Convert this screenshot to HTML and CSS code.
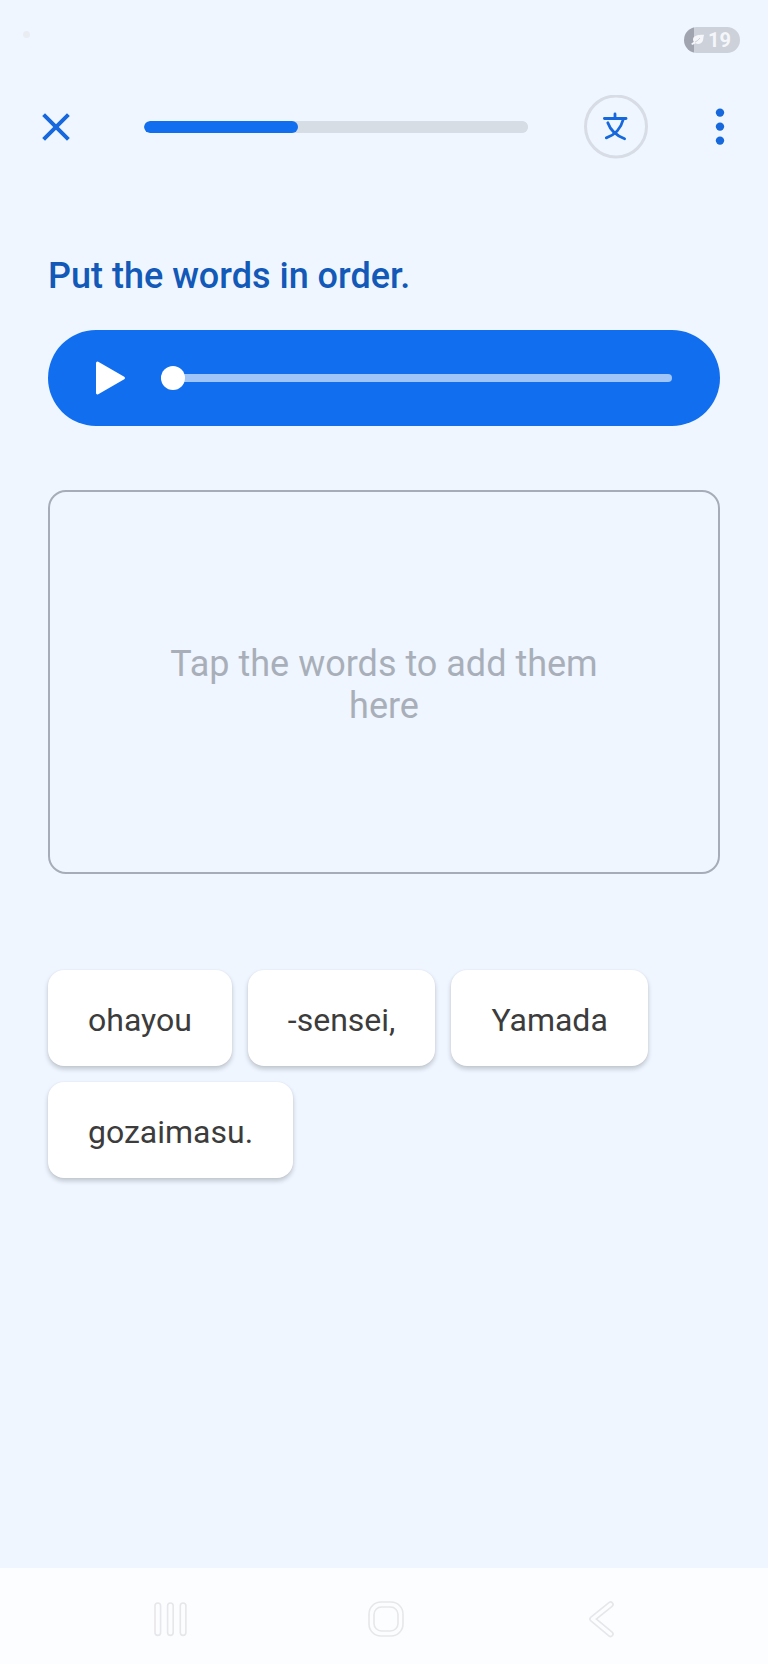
FILE: index.html
```
<!DOCTYPE html>
<html lang="en">

<head>
    <meta charset="utf-8">
    <meta name="viewport" content="width=device-width, initial-scale=1">
    <title>Put the words in order</title>
    <link rel="stylesheet" href="styles.css">
</head>

<body>
    <div class="status-bar">
        <span class="status-dot"></span>
        <div class="battery">
            <svg class="leaf" width="14" height="12" viewBox="0 0 14 12">
                <path d="M13.2 0.8C9 0.6 3.4 1 2.2 4.2C1.8 5.6 2.1 6.8 2.8 7.8C2 8.6 1 9.2 0.3 9.6L1 11C2.2 10.6 3.4 10 4.4 9.2C7 10.6 10.4 10 11.8 7C12.6 5.2 12.2 2.6 13.2 0.8Z" fill="#f4f6fa" />
                <path d="M4 8.2C6 7.2 7.8 5.6 9 4" fill="none" stroke="#cdd1d9" stroke-width="1" />
            </svg>
            <span>19</span>
        </div>
    </div>

    <header class="header">
        <button type="button" class="icon-btn" aria-label="Close">
            <svg width="32" height="32" viewBox="0 0 32 32">
                <path d="M3.6 3.6L28.4 28.4M28.4 3.6L3.6 28.4" stroke="#1668dc" stroke-width="4" />
            </svg>
        </button>
        <progress class="progress" value="40" max="100" aria-label="Lesson progress"></progress>
        <button type="button" class="translate-btn" aria-label="Translate">
            <svg width="64" height="64" viewBox="0 0 64 64">
                <circle cx="32" cy="31.5" r="30.5" fill="none" stroke="#d7dce5" stroke-width="3" />
                <g fill="none" stroke="#1668dc" stroke-width="2.8" stroke-linecap="round">
                    <path d="M20.4 23.5H42" />
                    <path d="M31 19V23.5" />
                    <path d="M23.8 27.7C26 34 31 40 40.6 43.7" />
                    <path d="M39.2 24.5C37 33 32 39.5 22.3 42.9" />
                </g>
            </svg>
        </button>
        <button type="button" class="icon-btn" aria-label="More options">
            <svg width="32" height="40" viewBox="0 0 32 40">
                <g fill="#1668dc">
                    <circle cx="16" cy="5.6" r="4.2" />
                    <circle cx="16" cy="19.6" r="4.2" />
                    <circle cx="16" cy="33.6" r="4.2" />
                </g>
            </svg>
        </button>
    </header>

    <main class="content">
        <h1>Put the words in order.</h1>

        <div class="player">
            <button type="button" class="play-btn" aria-label="Play">
                <svg width="32" height="36" viewBox="0 0 32 36">
                    <path d="M2.5 3L28.5 18L2.5 33Z" fill="#fff" stroke="#fff" stroke-width="3" stroke-linejoin="round" />
                </svg>
            </button>
            <input type="range" class="seek" min="0" max="100" value="0" aria-label="Audio position">
        </div>

        <div class="answer">
            <p>Tap the words to add them here</p>
        </div>

        <div class="words">
            <button type="button" class="word">ohayou</button>
            <button type="button" class="word">-sensei,</button>
            <button type="button" class="word">Yamada</button>
            <button type="button" class="word">gozaimasu.</button>
        </div>
    </main>

    <nav class="nav-bar">
        <button type="button" class="nav-btn" aria-label="Recent apps">
            <svg width="36" height="38" viewBox="0 0 36 38">
                <g fill="none" stroke="#e6e7ea" stroke-width="1.6">
                    <rect x="3" y="3" width="5.6" height="32.4" rx="2.8" />
                    <rect x="15.6" y="3" width="5.6" height="32.4" rx="2.8" />
                    <rect x="28.3" y="3" width="5.6" height="32.4" rx="2.8" />
                </g>
            </svg>
        </button>
        <button type="button" class="nav-btn" aria-label="Home">
            <svg width="36" height="38" viewBox="0 0 36 38">
                <g fill="none" stroke="#e6e7ea" stroke-width="1.6">
                    <rect x="1" y="2" width="34" height="34" rx="12" />
                    <rect x="6" y="7" width="24" height="24" rx="7.5" />
                </g>
            </svg>
        </button>
        <button type="button" class="nav-btn" aria-label="Back">
            <svg width="36" height="38" viewBox="0 0 36 38">
                <g fill="none" stroke-linecap="round" stroke-linejoin="round">
                    <path d="M26.5 4.5L8.5 19L26.5 34" stroke="#e6e7ea" stroke-width="6.6" />
                    <path d="M26.5 4.5L8.5 19L26.5 34" stroke="#fcfdff" stroke-width="3.4" />
                </g>
            </svg>
        </button>
    </nav>
</body>

</html>
```
FILE: styles.css
```
* {
    box-sizing: border-box;
}

body {
    margin: 0;
    min-height: 100vh;
    display: flex;
    flex-direction: column;
    font-family: Roboto, "Liberation Sans", sans-serif;
    background-color: #eff6ff;
}

button {
    padding: 0;
    border: none;
    background: none;
    font-family: inherit;
    cursor: pointer;
}

svg {
    display: block;
}

/* status bar */
.status-bar {
    display: flex;
    align-items: center;
    justify-content: space-between;
    height: 80px;
    padding: 0 28px 0 23px;
}

.status-dot {
    width: 7px;
    height: 7px;
    margin-bottom: 12px;
    border-radius: 50%;
    background-color: #e9edf2;
}

.battery {
    display: flex;
    align-items: center;
    gap: 3px;
    height: 26px;
    padding: 0 9px 0 7px;
    border-radius: 13px;
    background: linear-gradient(to right, #a0a4ae 10px, #cdd1d9 10px);
    font-size: 20px;
    font-weight: 700;
    line-height: 26px;
    color: #f4f6fa;
}

/* header */
.header {
    display: flex;
    align-items: center;
    height: 94px;
    padding: 0 32px 0 40px;
}

.progress {
    flex: 1;
    min-width: 0;
    height: 12px;
    margin: 0 56px 0 72px;
    border: none;
    border-radius: 6px;
    background-color: #d6dde4;
    overflow: hidden;
    appearance: none;
}

.progress::-webkit-progress-bar {
    background-color: #d6dde4;
    border-radius: 6px;
}

.progress::-webkit-progress-value {
    background-color: #116eee;
    border-radius: 6px;
}

.translate-btn {
    margin-right: 56px;
}

/* exercise */
.content {
    flex: 1;
    padding: 81px 48px 0;
}

h1 {
    margin: 0 0 33px;
    font-size: 36px;
    font-weight: 500;
    line-height: 42px;
    color: #1259b8;
}

.player {
    display: flex;
    align-items: center;
    gap: 34px;
    height: 96px;
    padding: 0 48px 0 47px;
    border-radius: 48px;
    background-color: #116eee;
}

.seek {
    flex: 1;
    min-width: 0;
    height: 24px;
    margin: 0;
    background: none;
    appearance: none;
}

.seek::-webkit-slider-runnable-track {
    height: 8px;
    border-radius: 4px;
    background-color: #a0c5f8;
}

.seek::-webkit-slider-thumb {
    width: 24px;
    height: 24px;
    margin-top: -8px;
    border-radius: 50%;
    background-color: #fff;
    appearance: none;
}

.answer {
    display: flex;
    align-items: center;
    justify-content: center;
    min-height: 384px;
    margin-top: 64px;
    padding: 6px 96px 0;
    border: 2px solid #a7adb8;
    border-radius: 18px;
}

.answer p {
    margin: 0;
    font-size: 36px;
    line-height: 42px;
    text-align: center;
    color: #a9afb9;
}

.words {
    display: flex;
    flex-wrap: wrap;
    gap: 16px;
    margin-top: 96px;
}

.word {
    height: 96px;
    padding: 3px 40px 0;
    border-radius: 16px;
    background-color: #fff;
    box-shadow: 0 3px 5px rgba(0, 0, 0, 0.2), 0 0 2px rgba(0, 0, 0, 0.06);
    font-size: 32px;
    color: #3c3c3c;
}

/* system navigation */
.nav-bar {
    display: flex;
    align-items: center;
    justify-content: center;
    gap: 180px;
    height: 96px;
    padding: 6px 0 0 3px;
    background-color: #fcfdff;
}
```
